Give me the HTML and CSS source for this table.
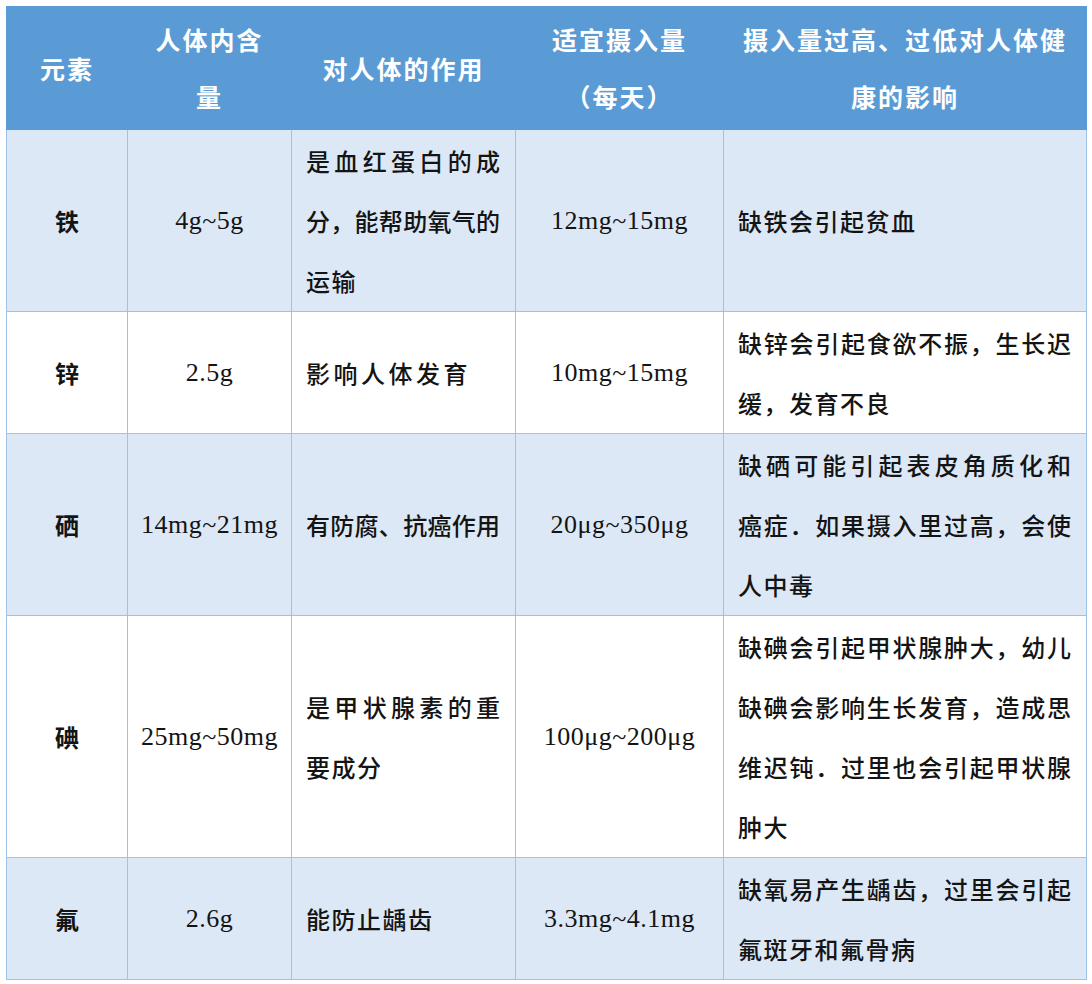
FILE: index.html
```html
<!DOCTYPE html>
<html lang="zh-CN">
<head>
<meta charset="utf-8">
<title>微量元素</title>
<link rel="stylesheet" href="styles.css">
</head>
<body>
<table class="tbl">
  <colgroup>
    <col class="c1"><col class="c2"><col class="c3"><col class="c4"><col class="c5">
  </colgroup>
  <thead>
    <tr>
      <th>元素</th>
      <th>人体内含<br>量</th>
      <th>对人体的作用</th>
      <th>适宜摄入量<br>（每天）</th>
      <th>摄入量过高、过低对人体健<br>康的影响</th>
    </tr>
  </thead>
  <tbody>
    <tr class="alt">
      <td class="el">铁</td>
      <td class="num">4g~5g</td>
      <td class="txt"><span class="ln j">是血红蛋白的成</span><span class="ln j">分，能帮助氧气的</span><span class="ln">运输</span></td>
      <td class="num">12mg~15mg</td>
      <td class="txt">缺铁会引起贫血</td>
    </tr>
    <tr>
      <td class="el">锌</td>
      <td class="num">2.5g</td>
      <td class="txt"><span class="ln wide">影响人体发育</span></td>
      <td class="num">10mg~15mg</td>
      <td class="txt"><span class="ln j">缺锌会引起食欲不振，生长迟</span><span class="ln">缓，发育不良</span></td>
    </tr>
    <tr class="alt">
      <td class="el">硒</td>
      <td class="num">14mg~21mg</td>
      <td class="txt"><span class="ln j">有防腐、抗癌作用</span></td>
      <td class="num">20μg~350μg</td>
      <td class="txt"><span class="ln j">缺硒可能引起表皮角质化和</span><span class="ln j">癌症．如果摄入里过高，会使</span><span class="ln">人中毒</span></td>
    </tr>
    <tr>
      <td class="el">碘</td>
      <td class="num">25mg~50mg</td>
      <td class="txt"><span class="ln j">是甲状腺素的重</span><span class="ln">要成分</span></td>
      <td class="num">100μg~200μg</td>
      <td class="txt"><span class="ln j">缺碘会引起甲状腺肿大，幼儿</span><span class="ln j">缺碘会影响生长发育，造成思</span><span class="ln j">维迟钝．过里也会引起甲状腺</span><span class="ln">肿大</span></td>
    </tr>
    <tr class="alt">
      <td class="el">氟</td>
      <td class="num">2.6g</td>
      <td class="txt"><span class="ln">能防止龋齿</span></td>
      <td class="num">3.3mg~4.1mg</td>
      <td class="txt"><span class="ln j">缺氧易产生龋齿，过里会引起</span><span class="ln">氟斑牙和氟骨病</span></td>
    </tr>
  </tbody>
</table>
</body>
</html>
```
FILE: styles.css
```css
body {
  margin: 0;
  padding: 6px;
  background: #ffffff;
}

.tbl {
  border-collapse: collapse;
  table-layout: fixed;
  width: 1080px;
  font-family: "Noto Sans CJK SC", "Noto Sans", sans-serif;
}

col.c1 { width: 121px; }
col.c2 { width: 164px; }
col.c3 { width: 224px; }
col.c4 { width: 208px; }
col.c5 { width: 363px; }

th {
  background: #5b9bd5;
  color: #ffffff;
  font-weight: 700;
  font-size: 25px;
  letter-spacing: 2px;
  line-height: 57px;
  padding: 4px 0;
  text-align: center;
  vertical-align: middle;
  border: 1.5px solid #5b9bd5;
}

td {
  border: 1.5px solid #9dc3e6;
  padding: 1px 0 0;
  line-height: 60px;
  vertical-align: middle;
  color: #141414;
  background: #ffffff;
}

tr.alt td {
  background: #dde8f6;
}

td.el {
  text-align: center;
  font-weight: 700;
  font-size: 24px;
}

td.num {
  text-align: center;
  font-family: "Liberation Serif", serif;
  font-size: 26px;
  letter-spacing: 0.5px;
}

td.txt {
  padding: 1px 15px 0 14px;
  font-size: 24px;
  font-weight: 500;
  letter-spacing: 1.5px;
  text-align: left;
}

.ln {
  display: block;
  white-space: nowrap;
}

.j {
  letter-spacing: 0;
  text-align: justify;
  text-align-last: justify;
}

.wide {
  letter-spacing: 3.5px;
}
```
